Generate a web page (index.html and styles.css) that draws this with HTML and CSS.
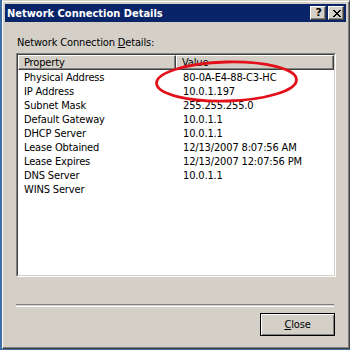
FILE: index.html
```html
<!DOCTYPE html>
<html>
<head>
<meta charset="utf-8">
<link rel="stylesheet" href="styles.css">
</head>
<body>
<div class="window">
  <div class="titlebar">
    <span class="title">Network Connection Details</span>
    <div class="tb-buttons">
      <span class="tbtn help">?</span>
      <span class="tbtn">
        <svg width="8" height="7" viewBox="0 0 8 7"><path d="M0 0h2v1h1v1h2V1h1V0h2v1H7v1H6v1H5v1h1v1h1v1h1v1H6V6H5V5H3v1H2v1H0V6h1V5h1V4h1V3H2V2H1V1H0z" fill="#000"/></svg>
      </span>
    </div>
  </div>
  <div class="content">
    <div class="label">Network Connection <u>D</u>etails:</div>
    <div class="listbox">
      <div class="listbox-inner">
        <div class="lv-header">
          <div class="hcell">Property</div>
          <div class="hcell">Value</div>
        </div>
        <div class="rows">
          <div class="cell">Physical Address</div><div class="cell val">80-0A-E4-88-C3-HC</div>
          <div class="cell">IP Address</div><div class="cell val">10.0.1.197</div>
          <div class="cell">Subnet Mask</div><div class="cell val">255.255.255.0</div>
          <div class="cell">Default Gateway</div><div class="cell val">10.0.1.1</div>
          <div class="cell">DHCP Server</div><div class="cell val">10.0.1.1</div>
          <div class="cell">Lease Obtained</div><div class="cell val">12/13/2007 8:07:56 AM</div>
          <div class="cell">Lease Expires</div><div class="cell val">12/13/2007 12:07:56 PM</div>
          <div class="cell">DNS Server</div><div class="cell val">10.0.1.1</div>
          <div class="cell">WINS Server</div><div class="cell val"></div>
        </div>
      </div>
    </div>
    <div class="separator"></div>
    <div class="footer">
      <button class="btn"><u>C</u>lose</button>
    </div>
  </div>
</div>
<svg class="annot" width="350" height="350" viewBox="0 0 350 350">
  <ellipse cx="226.5" cy="81.5" rx="70" ry="19.5" transform="rotate(-1.5 226.5 81.5)" fill="none" stroke="#e3101a" stroke-width="2.8"/>
</svg>
</body>
</html>
```
FILE: styles.css
```css
html, body {
  margin: 0;
  padding: 0;
}
body {
  width: 350px;
  height: 350px;
  background: #3a6ea5;
  padding-left: 2px;
  box-sizing: border-box;
  position: relative;
  font-family: "DejaVu Sans Condensed", "DejaVu Sans", sans-serif;
  font-stretch: condensed;
  font-size: 11px;
  line-height: 13px;
  letter-spacing: -0.15px;
  color: #000;
}
.window {
  width: 348px;
  height: 349px;
  box-sizing: border-box;
  background: #d4d0c8;
  border-left: 1px solid #ffffff;
  border-top: 1px solid #d4d0c8;
  border-right: 1px solid #404040;
  border-bottom: 1px solid #404040;
  box-shadow: inset 0 1px #ffffff, inset -1px -1px #808080;
  padding: 3px 3px 3px 2px;
  display: flex;
  flex-direction: column;
}
.titlebar {
  height: 18px;
  background: #0a246a;
  display: flex;
  align-items: flex-start;
  justify-content: space-between;
  padding: 0 2px 0 2px;
}
.title {
  color: #fff;
  font-weight: bold;
  line-height: 18px;
  padding-top: 1px;
  letter-spacing: 0;
}
.tb-buttons {
  display: flex;
  gap: 2px;
  margin-top: 2px;
}
.tbtn {
  width: 16px;
  height: 14px;
  box-sizing: border-box;
  background: #d4d0c8;
  border-top: 1px solid #ffffff;
  border-left: 1px solid #ffffff;
  border-right: 1px solid #404040;
  border-bottom: 1px solid #404040;
  box-shadow: inset -1px -1px #808080;
  display: flex;
  align-items: center;
  justify-content: center;
}
.help {
  font-weight: bold;
  font-size: 11px;
  line-height: 12px;
  font-family: "DejaVu Sans", sans-serif;
  font-stretch: normal;
  padding-left: 1px;
}
.tbtn svg {
  display: block;
  margin-left: 1px;
}
.content {
  flex: 1;
  display: flex;
  flex-direction: column;
  padding: 14px 11px 0 11px;
}
.label {
  padding-left: 1px;
  margin-bottom: 4px;
}
.listbox {
  width: 320px;
  height: 224px;
  box-sizing: border-box;
  border-top: 1px solid #808080;
  border-left: 1px solid #808080;
  border-right: 1px solid #ffffff;
  border-bottom: 1px solid #ffffff;
}
.listbox-inner {
  height: 100%;
  box-sizing: border-box;
  background: #ffffff;
  border-top: 1px solid #404040;
  border-left: 1px solid #404040;
  border-right: 1px solid #d4d0c8;
  border-bottom: 1px solid #d4d0c8;
}
.lv-header {
  display: grid;
  grid-template-columns: 158px 158px;
}
.hcell {
  box-sizing: border-box;
  height: 15px;
  background: #d4d0c8;
  border-top: 1px solid #ffffff;
  border-left: 1px solid #ffffff;
  border-right: 1px solid #404040;
  border-bottom: 1px solid #404040;
  box-shadow: inset -1px -1px #808080;
  padding-left: 5px;
}
.rows {
  display: grid;
  grid-template-columns: 158px 1fr;
  grid-auto-rows: 14px;
  padding-top: 1px;
}
.cell {
  padding-left: 6px;
  line-height: 14px;
  white-space: nowrap;
}
.cell.val {
  padding-left: 7px;
}
.separator {
  width: 318px;
  height: 1px;
  border-top: 1px solid #808080;
  border-bottom: 1px solid #ffffff;
  margin-top: 27px;
}
.footer {
  display: flex;
  justify-content: flex-end;
  margin-top: 6px;
}
.btn {
  width: 75px;
  height: 23px;
  box-sizing: border-box;
  margin: 0;
  padding: 0;
  background: #d4d0c8;
  border: 1px solid #000;
  box-shadow: inset 1px 1px #ffffff, inset -1px -1px #808080;
  font: inherit;
  font-stretch: condensed;
  letter-spacing: -0.15px;
  color: #000;
  line-height: 19px;
}
.annot {
  position: absolute;
  left: 0;
  top: 0;
  pointer-events: none;
}
```
